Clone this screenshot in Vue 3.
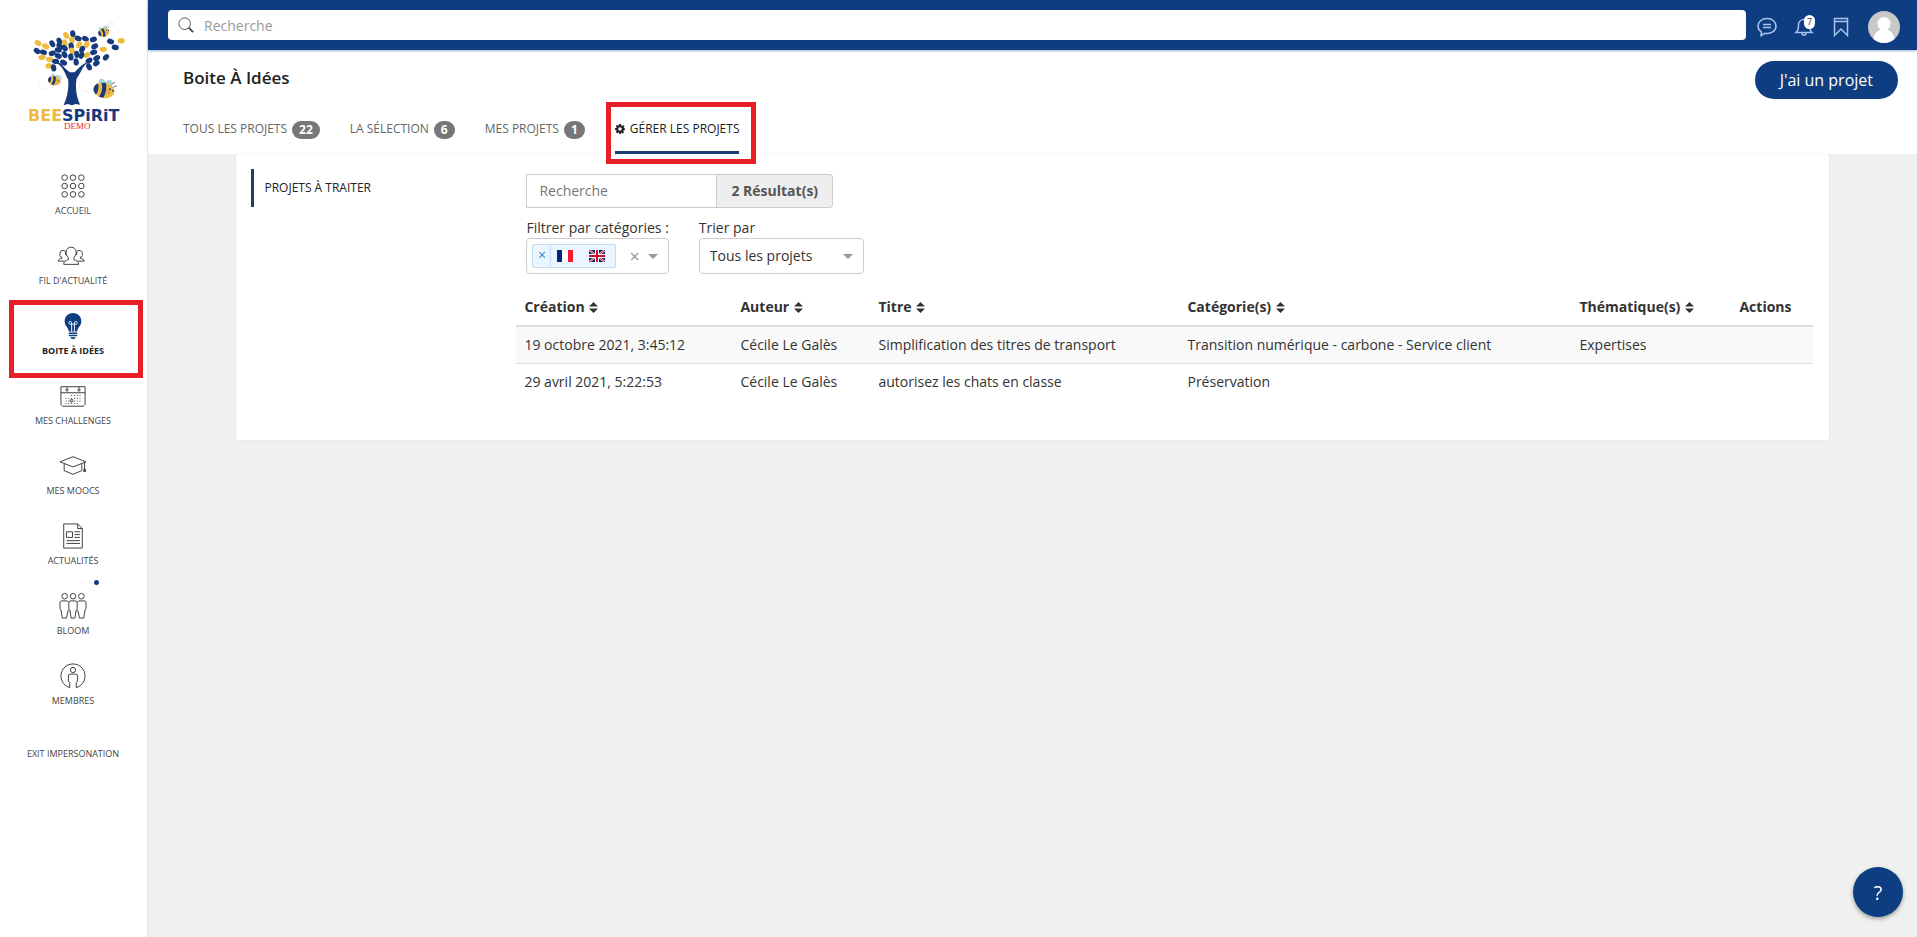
<template>
  <div class="layout">
    <aside class="sidebar">
      <a class="brand" href="#">
        <svg class="brand-tree" viewBox="0 0 444 327" aria-hidden="true">
          <ellipse
            v-for="(l, i) in leaves"
            :key="i"
            :cx="l[0]" :cy="l[1]" rx="11" ry="8"
            :transform="`rotate(${l[2]} ${l[0]} ${l[1]})`"
            :class="l[3] ? 'leaf-yellow' : 'leaf-blue'"
          />
          <path class="trunk" d="M160 184 C184 182 190 203 211 217 L225 217 C239 205 246 192 266 186 C250 198 243 220 231 238 C227 265 231 292 242 315 L229 313 L217 317 L205 313 L192 317 C204 290 208 266 206 240 C196 222 192 196 160 184Z" />
          <g class="trail">
            <path d="M232 232 C250 238 230 250 242 266 C252 280 268 276 278 272" />
            <path d="M146 258 C140 278 116 270 118 258 C120 248 132 254 128 262" />
            <path d="M320 84 C326 66 346 62 344 74 C342 82 334 76 340 66" />
          </g>
          <g v-for="b in bees" :key="b.y" :transform="`translate(${b.x} ${b.y}) rotate(${b.r}) scale(${b.s})`">
            <ellipse class="wing" cx="-9" cy="-22" rx="14" ry="9" transform="rotate(35 -9 -22)" />
            <ellipse class="wing" cx="8" cy="-24" rx="12" ry="8" transform="rotate(-40 8 -24)" />
            <ellipse class="leaf-yellow" rx="32" ry="23" />
            <path class="leaf-blue" d="M-32 0 C-32 -8 -28 -14 -22 -17 C-16 -6 -16 8 -21 17 C-28 12 -32 6 -32 0Z M-12 -21 L1 -23 C8 -8 8 8 2 23 L-11 21 C-4 8 -5 -8 -12 -21Z" />
            <circle class="leaf-blue" cx="17" cy="-7" r="3" />
            <circle class="leaf-blue" cx="27" cy="-5" r="3" />
            <path class="antenna" d="M18 -18 Q20 -30 28 -31 M24 -14 Q31 -22 36 -20" />
            <circle class="cheek" cx="15" cy="3" r="3" />
          </g>
        </svg>
        <span class="brand-name"><b>BEE</b>SPiRiT</span>
        <span class="brand-demo">DEMO</span>
      </a>

      <nav class="menu">
        <a
          v-for="item in menu"
          :key="item.id"
          href="#"
          :class="['menu-item', { active: item.id === 'ideas' }]"
        >
          <svg v-if="item.id === 'home'" class="menu-icon" viewBox="0 0 28 28">
            <template v-for="y in 3" :key="y">
              <circle v-for="x in 3" :key="x" :cx="x * 9 - 4" :cy="y * 9 - 4" r="3" />
            </template>
          </svg>
          <svg v-else-if="item.id === 'feed'" class="menu-icon" viewBox="0 0 28 28">
            <path d="M4 23 H20 C20 20 18 19 15 18 V15.500 C19 12 18 4.500 12 4.500 C6 4.500 5 12 9 15.500 V18 C6 19 4 20 4 23Z" />
            <path d="M5 19.500 H-2 C-2 17.500 0 17 2 16.500 V15 C-1 15 0 13 0 11 C0 9 1.500 8 3.500 8 C5 8 6 9 6 10.500 V13" />
            <path d="M19 19.500 H26 C26 17.500 24 17 22 16.500 V15 C25 15 24 13 24 11 C24 9 22.500 8 20.500 8 C19 8 18 9 18 10.500 V13" />
          </svg>
          <svg v-else-if="item.id === 'ideas'" class="menu-icon bulb" viewBox="0 0 28 28">
            <path class="fill" d="M14 0 C8.500 0 5 4 5 9 C5 14 9 15.500 9.500 20 H18.500 C19 15.500 23 14 23 9 C23 4 19.500 0 14 0Z M9.500 21 H18.500 V22.500 H9.500Z M9.500 23.500 H18.500 V25 H9.500Z M11 26 H17 L15.500 28 H12.500Z" />
            <path class="wire" d="M12.500 20 V12 M15.500 20 V12 M12.500 12 H10.500 A1.500 1.500 0 1 1 12.500 10.500 V12 H15.500 V10.500 A1.500 1.500 0 1 1 17.500 12 H15.500" />
          </svg>
          <svg v-else-if="item.id === 'challenges'" class="menu-icon" viewBox="0 0 28 28">
            <path d="M1 4 H27 V23 L25 25 H3 L1 23Z M1 10.500 H27" />
            <circle cx="7.500" cy="7.500" r="1.200" />
            <circle cx="20.500" cy="7.500" r="1.200" />
            <path d="M7.500 4.500 V6 M20.500 4.500 V6" />
            <path class="dots" d="M12 13.500 H23 M6 16.500 H23 M6 19.500 H23 M6 22 H19" />
            <circle cx="12.500" cy="19" r="1.500" />
          </svg>
          <svg v-else-if="item.id === 'moocs'" class="menu-icon" viewBox="0 0 28 28">
            <path d="M0 9.500 L14 4 L28 9.500 L14 15 Z M4.500 11.500 V19 L14 23 L23.500 19 V11.500 M26.500 10 V20" />
            <path d="M26 17 L25.500 20 H27.500 L27 17Z" />
          </svg>
          <svg v-else-if="item.id === 'news'" class="menu-icon" viewBox="0 0 28 28">
            <path d="M4 1 H19 L24 6 V27 H4Z M19 1 V6 H24 M7 9.500 H13.500 V15.500 H7Z M15.500 9.500 H21.500 M15.500 12.500 H21.500 M15.500 15.500 H21.500 M7 19 H21.500 M7 22 H21.500" />
          </svg>
          <svg v-else-if="item.id === 'bloom'" class="menu-icon" viewBox="0 0 28 28">
            <circle v-for="x in 3" :key="x" :cx="x * 9 - 4" cy="3.500" r="3" />
            <path d="M2.500 27 H7 L9 18 M2.500 27 L1 18 L0 17 V10 Q0 8.500 2 8.500 H8 L9.500 10 M12 27 H16 L17.500 18 L18.500 17 V10 L17 8.500 H11 L9.500 10 V17 L10.500 18 L12 27 M18.500 10 L20 8.500 H26 Q28 8.500 28 10 V17 L27 18 L25.500 27 H21 L19 18" />
          </svg>
          <svg v-else class="menu-icon" viewBox="0 0 28 28">
            <path d="M10.500 26.500 A13 13 0 1 1 17.500 26.500 V21 L19 19.500 V14 Q19 12 17 12 H11 Q9 12 9 14 V19.500 L10.500 21 V26.500" />
            <circle cx="14" cy="7.500" r="2.800" />
          </svg>
          <span>{{ item.label }}</span>
          <i v-if="item.dot" class="menu-dot"></i>
        </a>
      </nav>
      <a class="exit" href="#">EXIT IMPERSONATION</a>
    </aside>

    <div class="main">
      <header class="topbar">
        <label class="global-search">
          <svg viewBox="0 0 18 18" aria-hidden="true">
            <circle cx="7.500" cy="7.500" r="6.500" />
            <path d="M12 12 L17 17" stroke-width="2" />
          </svg>
          <input v-model="globalSearch" type="text" placeholder="Recherche" aria-label="Recherche" />
        </label>
        <div class="top-actions">
          <button class="icon-btn" title="Messages">
            <svg viewBox="0 0 20 20">
              <path d="M10 1.500 C4.500 1.500 1 5 1 9 C1 11.500 2.300 13.500 4.500 15 L4 18.500 L8 16.300 C14 17.300 19 14 19 9 C19 5 15.500 1.500 10 1.500Z M6 7.500 H14 M6 10.500 H14" />
            </svg>
          </button>
          <button class="icon-btn" title="Notifications">
            <svg viewBox="0 0 20 20">
              <path d="M2 15.500 H18 C15.500 13.500 15.500 11 15.500 8 C15.500 4.500 13 2.500 10 2.500 C7 2.500 4.500 4.500 4.500 8 C4.500 11 4.500 13.500 2 15.500Z M8 16 C8 19 12 19 12 16" />
            </svg>
            <span class="notif">7</span>
          </button>
          <button class="icon-btn" title="Favoris">
            <svg viewBox="0 0 20 20">
              <path d="M3.500 1.500 H16.500 V18.500 L10 12 L3.500 18.500Z M3.500 4.500 H16.500" />
            </svg>
          </button>
          <button class="avatar" title="Profil">
            <svg viewBox="0 0 32 32">
              <circle cx="16" cy="16" r="16" fill="#c9c9c9" />
              <path fill="#fff" d="M16 6 C12 6 9.500 9 9.500 12.500 C9.500 15.500 11 17.500 12.500 18.500 C9 20 6 23 5.500 28 A16 16 0 0 0 26.500 28 C26 23 23 20 19.500 18.500 C21 17.500 22.500 15.500 22.500 12.500 C22.500 9 20 6 16 6Z" />
            </svg>
          </button>
        </div>
      </header>

      <section class="page-head">
        <div class="title-row">
          <h1>Boite À Idées</h1>
          <button class="btn-project">J'ai un projet</button>
        </div>
        <nav class="tabs">
          <a
            v-for="t in tabs"
            :key="t.id"
            href="#"
            :class="['tab', { active: tab === t.id }]"
            @click.prevent="tab = t.id"
          >
            <svg v-if="t.id === 'manage'" class="cog" viewBox="0 0 20 20">
              <path fill-rule="evenodd" d="M8 0 H12 L12.600 3 L14.500 3.800 L17 2.200 L19 5 L17.300 7 L18 8.500 L20 9 V12 L17.500 12.500 L16.700 14.300 L18 17 L15.500 19 L13 17.300 L12 17.700 L11.500 20 H8.500 L8 17.700 L6.500 17 L4 18.500 L1.700 16 L3.200 13.700 L2.500 12.300 L0 12 V8.500 L2.500 8 L3.200 6 L1.800 4 L4 1.700 L6.500 3.300 L7.500 3Z M10 6.500 A3.500 3.500 0 1 0 10 13.500 A3.500 3.500 0 1 0 10 6.500Z" />
            </svg>
            <span>{{ t.label }}</span>
            <span v-if="t.count" class="badge">{{ t.count }}</span>
          </a>
        </nav>
      </section>

      <main class="card">
        <nav class="side-nav">
          <a href="#" class="side-link">PROJETS À TRAITER</a>
        </nav>
        <div class="content">
          <div class="search-group">
            <input v-model="search" type="text" placeholder="Recherche" aria-label="Rechercher un projet" />
            <span class="result-count">{{ rows.length }} Résultat(s)</span>
          </div>

          <div class="filters">
            <div class="field">
              <label id="category-label">Filtrer par catégories :</label>
              <div class="multi" role="group" aria-labelledby="category-label">
                <div class="tag">
                  <button class="tag-remove" title="Retirer">×</button>
                  <span class="flags">
                    <svg viewBox="0 0 16 12">
                      <path fill="#fff" d="M0 0H16V12H0Z" />
                      <path fill="#00267f" d="M0 0H5V12H0Z" />
                      <path fill="#f31830" d="M11 0H16V12H11Z" />
                    </svg>
                    <svg viewBox="0 0 16 12">
                      <path fill="#012169" d="M0 0H16V12H0Z" />
                      <path stroke="#fff" stroke-width="2" d="M0 0L16 12M16 0L0 12" />
                      <path stroke="#c8102e" stroke-width="1" d="M0 0L16 12M16 0L0 12" />
                      <path stroke="#fff" stroke-width="4" d="M8 0V12M0 6H16" />
                      <path stroke="#c8102e" stroke-width="2" d="M8 0V12M0 6H16" />
                    </svg>
                  </span>
                </div>
                <button class="multi-clear" title="Effacer">×</button>
                <button class="multi-arrow" title="Ouvrir"><i class="caret"></i></button>
              </div>
            </div>
            <div class="field">
              <label for="sort">Trier par</label>
              <div class="select-wrap">
                <select id="sort" v-model="sort">
                  <option value="all">Tous les projets</option>
                </select>
                <i class="caret"></i>
              </div>
            </div>
          </div>

          <table>
            <colgroup>
              <col class="col-date" />
              <col class="col-author" />
              <col class="col-title" />
              <col class="col-category" />
              <col class="col-theme" />
              <col class="col-actions" />
            </colgroup>
            <thead>
              <tr>
                <th v-for="c in columns" :key="c.key">
                  {{ c.label }}
                  <svg v-if="c.sortable" class="sort-icon" viewBox="0 0 10 12">
                    <path d="M5 0 L10 5 H0Z M5 12 L10 7 H0Z" />
                  </svg>
                </th>
              </tr>
            </thead>
            <tbody>
              <tr v-for="r in rows" :key="r.date">
                <td v-for="c in columns" :key="c.key">{{ r[c.key] }}</td>
              </tr>
            </tbody>
          </table>
        </div>
      </main>
    </div>

    <button class="help-btn" title="Aide">?</button>
  </div>
</template>

<script setup>
import { ref } from 'vue'

const globalSearch = ref('')
const search = ref('')
const sort = ref('all')
const tab = ref('manage')

const menu = [
  { id: 'home', label: 'ACCUEIL' },
  { id: 'feed', label: "FIL D'ACTUALITÉ" },
  { id: 'ideas', label: 'BOITE À IDÉES' },
  { id: 'challenges', label: 'MES CHALLENGES' },
  { id: 'moocs', label: 'MES MOOCS' },
  { id: 'news', label: 'ACTUALITÉS' },
  { id: 'bloom', label: 'BLOOM', dot: true },
  { id: 'members', label: 'MEMBRES' },
]

const tabs = [
  { id: 'all', label: 'TOUS LES PROJETS', count: 22 },
  { id: 'selection', label: 'LA SÉLECTION', count: 6 },
  { id: 'mine', label: 'MES PROJETS', count: 1 },
  { id: 'manage', label: 'GÉRER LES PROJETS' },
]

const columns = [
  { key: 'date', label: 'Création', sortable: true },
  { key: 'author', label: 'Auteur', sortable: true },
  { key: 'title', label: 'Titre', sortable: true },
  { key: 'category', label: 'Catégorie(s)', sortable: true },
  { key: 'theme', label: 'Thématique(s)', sortable: true },
  { key: 'actions', label: 'Actions' },
]

const rows = [
  {
    date: '19 octobre 2021, 3:45:12',
    author: 'Cécile Le Galès',
    title: 'Simplification des titres de transport',
    category: 'Transition numérique - carbone - Service client',
    theme: 'Expertises',
  },
  {
    date: '29 avril 2021, 5:22:53',
    author: 'Cécile Le Galès',
    title: 'autorisez les chats en classe',
    category: 'Préservation',
  },
]

// x, y, angle, yellow
const leaves = [
  [220, 101, 80, 0], [200, 106, 60, 1], [236, 115, 20, 0], [258, 116, 30, 0], [282, 118, -20, 0],
  [179, 123, 70, 0], [158, 131, 60, 0], [196, 128, 70, 1], [217, 120, 80, 1], [115, 129, 30, 1],
  [138, 139, 30, 1], [112, 153, 40, 0], [131, 157, 20, 0], [127, 172, -10, 1], [150, 178, 0, 1],
  [158, 160, -20, 0], [176, 150, 10, 0], [180, 138, 50, 0], [195, 144, 40, 0], [215, 138, 80, 0],
  [218, 153, 70, 1], [239, 134, -60, 1], [262, 133, -60, 1], [286, 139, -30, 0], [248, 148, -60, 0],
  [312, 148, 0, 1], [334, 124, 20, 0], [366, 122, 0, 1], [348, 142, 15, 0], [262, 165, -30, 1],
  [283, 157, -20, 0], [292, 174, -30, 0], [320, 172, -50, 0], [269, 182, -30, 0], [291, 190, -40, 0],
  [269, 201, 60, 0], [214, 171, 80, 0], [232, 163, 80, 0], [230, 186, 80, 0], [246, 166, -70, 0],
  [195, 164, 60, 0], [176, 168, 20, 0], [192, 188, 30, 0], [168, 184, 0, 0], [148, 198, -10, 1],
  [162, 204, 80, 0],
]

const bees = [
  { x: 314, y: 97, r: -15, s: 0.55 },
  { x: 164, y: 243, r: 15, s: 0.6 },
  { x: 314, y: 272, r: 12, s: 1 },
]
</script>

<style>
body { background: #f0f0f0; }
</style>

<style scoped>
.layout {
  display: flex; min-height: 100vh;
  font-family: "Open Sans", "Noto Sans", sans-serif; font-size: 14px; color: #333;
}
.layout *, .layout *::after { box-sizing: border-box; }
a { color: inherit; text-decoration: none; }
button, input, select { font: inherit; color: inherit; }
button { padding: 0; border: none; background: none; cursor: pointer; }

.sidebar {
  flex: 0 0 148px; min-width: 0; display: flex; flex-direction: column;
  background: #fff; border-right: 1px solid #e6e6e6;
  font-size: 9px; line-height: 14px; color: #444;
}
.brand { position: relative; height: 162px; display: flex; flex-direction: column; }
.brand-tree { display: block; width: 100%; height: 109px; }
.leaf-yellow { fill: #edbb40; }
.leaf-blue, .trunk { fill: #17397d; }
.wing { fill: #a9d5d6; }
.cheek { fill: #e8734c; }
.trail { fill: none; stroke: #ddd; stroke-width: 2; stroke-dasharray: 4 3; }
.antenna { fill: none; stroke: #35506b; stroke-width: 2; }
.brand-name {
  margin-left: 28px; font-family: "DejaVu Sans", sans-serif; font-size: 16px;
  line-height: 14px; font-weight: 700; color: #17397d;
}
.brand-name b { color: #edbb40; }
.brand-demo {
  position: absolute; top: 120px; left: 64px; line-height: 12px;
  font-family: "Liberation Serif", serif; font-size: 9px; color: #f0202c;
}
.menu-item {
  position: relative; display: flex; flex-direction: column; align-items: center;
  gap: 5px; height: 70px; padding: 11px 1px 0 0;
}
.menu-icon { width: 26px; height: 26px; overflow: visible; fill: none; stroke: #333; stroke-width: 1; }
.menu-icon .dots { stroke-dasharray: 1 2; }
.bulb .fill { fill: #0f3d81; stroke: none; }
.bulb .wire { stroke: #fff; }
.menu-item.active { font-weight: 700; color: #222; }
.menu-item.active::after {
  content: ''; position: absolute; top: -2px; left: 9px; right: 4px; height: 78px;
  border: 5px solid #e81f27;
}
.menu-dot {
  position: absolute; top: -2px; left: 94px; width: 5px; height: 5px;
  border-radius: 50%; background: #0f3d81;
}
.exit { margin-top: 25px; padding-right: 1px; text-align: center; }

.main { flex: 1; min-width: 0; }
.topbar {
  display: flex; align-items: center; height: 50px; padding: 0 17px 0 20px;
  background: #0f3d81; box-shadow: 0 1px 2px #0f3d8166; position: relative;
}
.global-search {
  flex: 1; display: flex; align-items: center; gap: 10px; height: 30px;
  padding: 0 10px; background: #fff; border-radius: 4px;
}
.global-search svg { width: 16px; height: 16px; overflow: visible; fill: none; stroke: #444; stroke-width: 1; }
.global-search input { flex: 1; min-width: 0; padding: 0; border: none; outline: none; background: none; }
input::placeholder { color: #777; opacity: 1; }
.global-search input::placeholder { color: #999; }
.top-actions { display: flex; align-items: center; gap: 17px; margin-left: 11px; padding-top: 3px; }
.icon-btn { position: relative; width: 20px; height: 20px; }
.icon-btn svg { display: block; width: 20px; height: 20px; fill: none; stroke: #a8c3ec; stroke-width: 1.5; }
.notif {
  position: absolute; top: -2px; right: -1px; width: 11px; height: 14px; border-radius: 6px;
  background: #fff; color: #333; font-size: 9px; line-height: 14px; text-align: center;
}
.avatar { width: 32px; height: 32px; }
.avatar svg { display: block; }

.page-head { background: #fff; height: 104px; padding: 11px 19px 0 35px; }
.title-row { display: flex; justify-content: space-between; height: 48px; }
h1 { margin: 6px 0 0; font-size: 17px; line-height: 22px; font-weight: 600; color: #222; }
.btn-project {
  height: 38px; padding: 0 25px; border-radius: 19px;
  background: #0f3d81; color: #fff; font-size: 16px;
}
.tabs { display: flex; gap: 30px; height: 45px; font-size: 12px; color: #666; }
.tab { position: relative; display: flex; align-items: center; gap: 5px; padding-bottom: 6px; height: 45px; }
.tab.active { color: #222; border-bottom: 3px solid #1c3f72; padding-bottom: 3px; }
.tab.active::after {
  content: ''; position: absolute; top: -7px; left: -9px; right: -17px; bottom: -13px;
  border: 5px solid #e81f27;
}
.cog { width: 10px; height: 10px; fill: #222; }
.badge {
  padding: 0 7px; height: 18px; line-height: 18px; border-radius: 9px; margin-top: 2px;
  background: #777; color: #fff; font-weight: 700;
}

.card {
  display: flex; width: 90%; min-height: 286px; margin: 0 auto; padding: 15px 16px 40px 15px;
  background: #fff; border-radius: 3px; box-shadow: 0 0 2px #0000001a;
}
.side-nav { flex: 0 0 265px; }
.side-link {
  display: block; border-left: 3px solid #1c3f72; padding-left: 10px;
  font-size: 12px; line-height: 38px; color: #222;
}
.content { flex: 1; min-width: 0; padding-top: 5px; }
.search-group { display: flex; height: 34px; margin-left: 10px; }
.search-group input {
  width: 191px; padding: 0 12px 2px; border: 1px solid #ccc; outline: none; background: #fff;
}
.result-count {
  padding: 0 14px; line-height: 32px; font-weight: 700; color: #555;
  background: #eee; border: 1px solid #ccc; border-left: none; border-radius: 0 4px 4px 0;
}
.filters { display: flex; gap: 30px; margin: 10px 0 0 10px; }
.field { display: flex; flex-direction: column; }
.field label { line-height: 20px; }
.multi, .select-wrap {
  display: flex; align-items: center; height: 36px;
  background: #fff; border: 1px solid #ccc; border-radius: 4px;
}
.multi { padding: 0 10px 0 5px; }
.tag {
  display: flex; height: 24px; border: 1px solid #bedcf5;
  border-radius: 2px; background: #ebf5ff; color: #007eff;
}
.tag-remove { width: 18px; border-right: 1px solid #bedcf5; line-height: 18px; padding-bottom: 2px; color: #2f7fd0; }
.flags { display: flex; align-items: center; gap: 16px; padding: 0 10px 0 6px; }
.flags svg { width: 16px; height: 12px; }
.multi-clear { margin-left: auto; font-size: 18px; line-height: 18px; color: #999; }
.multi-arrow { display: flex; margin-left: 8px; }
.caret { border: 5px solid transparent; border-top-color: #999; border-bottom: none; }
.select-wrap { position: relative; width: 165px; }
.select-wrap select {
  appearance: none; width: 100%; height: 34px; padding: 0 10px 2px;
  border: none; outline: none; background: none;
}
.select-wrap .caret { position: absolute; right: 10px; top: 15px; pointer-events: none; }

table { width: 100%; margin-top: 11px; border-collapse: collapse; table-layout: fixed; }
.col-date { width: 216px; }
.col-author { width: 138px; }
.col-title { width: 309px; }
.col-category { width: 392px; }
.col-theme { width: 160px; }
.col-actions { width: 82px; }
th, td { padding: 8px; text-align: left; line-height: 20px; }
th { padding: 12px 8px 8px; font-weight: 700; border-bottom: 2px solid #ddd; white-space: nowrap; }
tbody tr + tr td { border-top: 1px solid #ddd; }
tbody tr:nth-child(odd) { background: #f9f9f9; }
.sort-icon { width: 9px; height: 11px; margin-left: 1px; vertical-align: -1px; fill: #333; }

.help-btn {
  position: fixed; right: 14px; bottom: 20px; width: 50px; height: 50px; border-radius: 50%;
  background: #0f3d81; color: #fff; font-size: 20px; box-shadow: 0 2px 4px #00000059;
}
</style>
